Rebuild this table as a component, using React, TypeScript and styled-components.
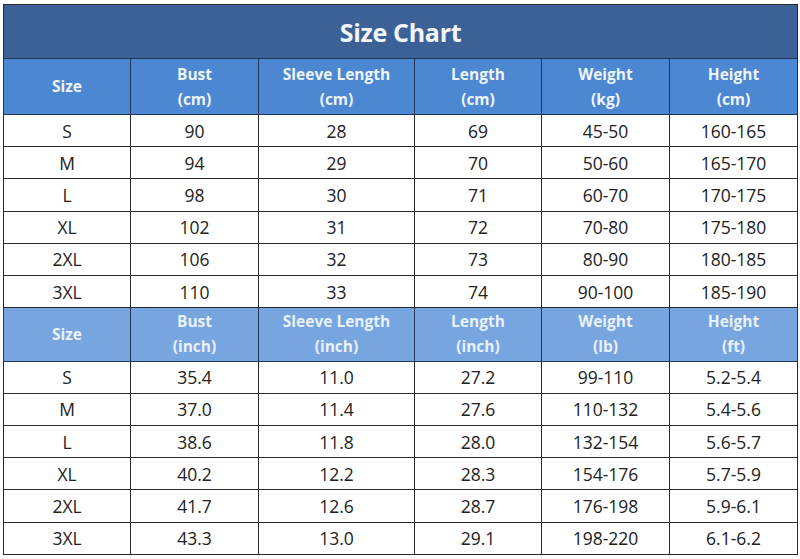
import styled, { createGlobalStyle } from "styled-components";

const GlobalStyle = createGlobalStyle`
  html, body {
    margin: 0;
    padding: 0;
    background: #ffffff;
  }
  body {
    font-family: "Open Sans", "Liberation Sans", sans-serif;
  }
`;

const Page = styled.div`
  width: 800px;
  height: 559px;
  padding: 4px 3px 0 3px;
  box-sizing: border-box;
`;

const Table = styled.table`
  width: 794px;
  border-collapse: collapse;
  table-layout: fixed;
  border: 1.5px solid #2a2a2a;
`;

const TitleCell = styled.th`
  height: 53px;
  background: #3b6197;
  color: #f2f6fb;
  font-size: 25px;
  font-weight: 700;
  letter-spacing: -0.3px;
  text-align: center;
  border-bottom: 1.5px solid #1f3556;
  padding: 0;
`;

const HeadCell = styled.th<{ $light?: boolean }>`
  height: ${(p) => (p.$light ? "52.5px" : "55px")};
  background: ${(p) => (p.$light ? "#77a5df" : "#4c87d1")};
  color: ${(p) => (p.$light ? "#e9f1fb" : "#eef4fc")};
  font-size: 15.5px;
  font-weight: 700;
  line-height: 25px;
  text-align: center;
  border: 1.5px solid #1f3556;
  padding: 0;
`;

const Cell = styled.td`
  height: 31.2px;
  font-size: 17.5px;
  color: #222222;
  text-align: center;
  border: 1.5px solid #2a2a2a;
  padding: 0;
`;

const widths = [127, 128, 156, 127, 128, 128];

const cmHeaders = [
  ["Size"],
  ["Bust", "(cm)"],
  ["Sleeve Length", "(cm)"],
  ["Length", "(cm)"],
  ["Weight", "(kg)"],
  ["Height", "(cm)"],
];

const inchHeaders = [
  ["Size"],
  ["Bust", "(inch)"],
  ["Sleeve Length", "(inch)"],
  ["Length", "(inch)"],
  ["Weight", "(lb)"],
  ["Height", "(ft)"],
];

const cmRows = [
  ["S", "90", "28", "69", "45-50", "160-165"],
  ["M", "94", "29", "70", "50-60", "165-170"],
  ["L", "98", "30", "71", "60-70", "170-175"],
  ["XL", "102", "31", "72", "70-80", "175-180"],
  ["2XL", "106", "32", "73", "80-90", "180-185"],
  ["3XL", "110", "33", "74", "90-100", "185-190"],
];

const inchRows = [
  ["S", "35.4", "11.0", "27.2", "99-110", "5.2-5.4"],
  ["M", "37.0", "11.4", "27.6", "110-132", "5.4-5.6"],
  ["L", "38.6", "11.8", "28.0", "132-154", "5.6-5.7"],
  ["XL", "40.2", "12.2", "28.3", "154-176", "5.7-5.9"],
  ["2XL", "41.7", "12.6", "28.7", "176-198", "5.9-6.1"],
  ["3XL", "43.3", "13.0", "29.1", "198-220", "6.1-6.2"],
];

const HeaderRow = ({ cols, light }: { cols: string[][]; light?: boolean }) => (
  <tr>
    {cols.map((c, i) => (
      <HeadCell key={i} $light={light}>
        {c.map((line, j) => (
          <div key={j}>{line}</div>
        ))}
      </HeadCell>
    ))}
  </tr>
);

const DataRows = ({ rows }: { rows: string[][] }) => (
  <>
    {rows.map((r, i) => (
      <tr key={i}>
        {r.map((v, j) => (
          <Cell key={j}>{v}</Cell>
        ))}
      </tr>
    ))}
  </>
);

const App = () => {
  return (
    <Page>
      <GlobalStyle />
      <Table>
        <colgroup>
          {widths.map((w, i) => (
            <col key={i} style={{ width: w }} />
          ))}
        </colgroup>
        <thead>
          <tr>
            <TitleCell colSpan={6}>Size Chart</TitleCell>
          </tr>
        </thead>
        <tbody>
          <HeaderRow cols={cmHeaders} />
          <DataRows rows={cmRows} />
          <HeaderRow cols={inchHeaders} light />
          <DataRows rows={inchRows} />
        </tbody>
      </Table>
    </Page>
  );
};

export default App;
